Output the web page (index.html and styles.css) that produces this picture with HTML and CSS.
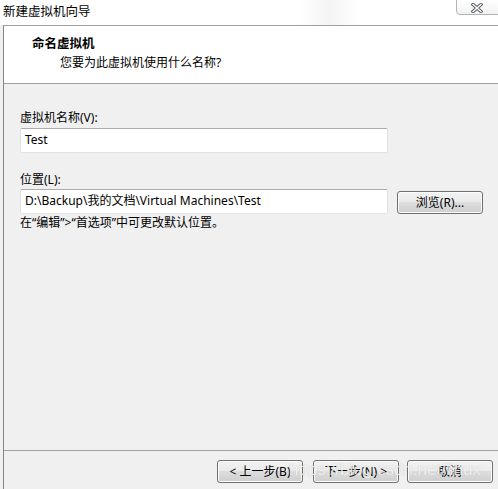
FILE: index.html
```html
<!DOCTYPE html>
<html lang="zh-CN">
<head>
<meta charset="utf-8">
<title>新建虚拟机向导</title>
<link rel="stylesheet" href="styles.css">
</head>
<body>
<div class="window">
  <div class="titlebar">
    <span class="title">新建虚拟机向导</span>
    <div class="close">
      <svg width="12" height="10" viewBox="0 0 12 10">
        <path d="M2 1.5 L10 8.5 M10 1.5 L2 8.5" stroke="#5a5f6a" stroke-width="3.4" stroke-linecap="square" fill="none"/>
        <path d="M2 1.5 L10 8.5 M10 1.5 L2 8.5" stroke="#ffffff" stroke-width="1.4" stroke-linecap="square" fill="none"/>
      </svg>
    </div>
  </div>
  <div class="frame">
    <div class="header">
      <div class="h-title">命名虚拟机</div>
      <div class="h-sub">您要为此虚拟机使用什么名称?</div>
    </div>
    <div class="content">
      <div class="label first">虚拟机名称(V):</div>
      <div class="input">Test</div>
      <div class="label second">位置(L):</div>
      <div class="row">
        <div class="input">D:\Backup\我的文档\Virtual Machines\Test</div>
        <button class="btn browse">浏览(R)...</button>
      </div>
      <div class="hint">在“编辑”&gt;“首选项”中可更改默认位置。</div>
    </div>
    <div class="footer">
      <button class="btn">&lt; 上一步(B)</button>
      <button class="btn next">下一步(N) &gt;</button>
      <button class="btn cancel">取消</button>
      <div class="watermark">https://blog.csdn.net/linux</div>
    </div>
  </div>
</div>
</body>
</html>
```
FILE: styles.css
```css
html, body {
  margin: 0;
  padding: 0;
}
body {
  width: 498px;
  height: 489px;
  overflow: hidden;
  background: #f0f0f0;
  font-family: "Noto Sans", "Noto Sans CJK SC", sans-serif;
  font-size: 12px;
  color: #000;
}
.window {
  height: 489px;
  display: flex;
  flex-direction: column;
}
.titlebar {
  height: 25px;
  flex: none;
  position: relative;
  background: linear-gradient(90deg, #ffffff 0%, #ffffff 60%, #f4f4f4 66%, #ffffff 72%, #ffffff 100%);
  display: flex;
  align-items: flex-start;
}
.title {
  margin: 3px 0 0 3px;
  font-size: 12.5px;
  line-height: 18px;
  color: #000;
}
.close {
  position: absolute;
  right: -6px;
  top: -1px;
  width: 48px;
  height: 16px;
  border: 1px solid #b4b4b4;
  border-bottom-left-radius: 4px;
  background: linear-gradient(#ffffff, #f2f2f2);
  display: flex;
  align-items: center;
  justify-content: center;
  padding-right: 6px;
  box-sizing: border-box;
}
.close svg {
  display: block;
  margin-top: 1px;
}
.frame {
  flex: 1;
  margin-left: 3px;
  border-left: 1px solid #858585;
  border-top: 1px solid #a0a0a0;
  display: flex;
  flex-direction: column;
}
.header {
  height: 57px;
  flex: none;
  background: #ffffff;
  border-bottom: 1px solid #a0a0a0;
}
.h-title {
  margin: 10px 0 0 28px;
  font-weight: bold;
  font-size: 12.5px;
  line-height: 16px;
}
.h-sub {
  margin: 3px 0 0 56px;
  font-size: 12px;
  line-height: 16px;
}
.content {
  flex: 1;
  padding-left: 16px;
  background: #f0f0f0;
}
.label {
  line-height: 16px;
}
.label.first {
  margin-top: 26px;
}
.label.second {
  margin-top: 19px;
}
.input {
  margin-top: 2px;
  width: 368px;
  height: 25px;
  box-sizing: border-box;
  background: #ffffff;
  border: 1px solid #dfe3e8;
  border-top-color: #abadb3;
  border-radius: 2px;
  padding: 0 4px;
  line-height: 22px;
  white-space: nowrap;
}
.row {
  display: flex;
  align-items: center;
  margin-top: 1px;
}
.row .input {
  margin-top: 0;
}
.btn {
  font-family: inherit;
  font-size: 12px;
  color: #000;
  width: 86px;
  height: 23px;
  box-sizing: border-box;
  border: 1px solid #707070;
  border-radius: 3px;
  background: linear-gradient(#f2f2f2 0%, #ebebeb 45%, #dddddd 50%, #cfcfcf 100%);
  box-shadow: inset 0 0 0 1px #fcfcfc;
  padding: 0;
  margin: 0;
  line-height: 19px;
  text-align: center;
}
.browse {
  margin-left: 9px;
  margin-top: 1px;
}
.hint {
  margin-top: 1px;
  line-height: 16px;
}
.footer {
  height: 39px;
  flex: none;
  border-top: 1px solid #a0a0a0;
  display: flex;
  justify-content: flex-end;
  align-items: flex-start;
  padding: 9px 5px 0 0;
  box-sizing: border-box;
  position: relative;
  background: #f0f0f0;
}
.btn.next {
  margin-left: 10px;
}
.btn.cancel {
  margin-left: 8px;
}
.watermark {
  position: absolute;
  left: 285px;
  top: 9px;
  font-family: "Liberation Sans", sans-serif;
  font-size: 17px;
  line-height: 20px;
  color: rgba(255, 255, 255, 0.75);
  text-shadow: 0 0 1px rgba(150, 150, 150, 0.5);
  pointer-events: none;
  white-space: nowrap;
}
```
